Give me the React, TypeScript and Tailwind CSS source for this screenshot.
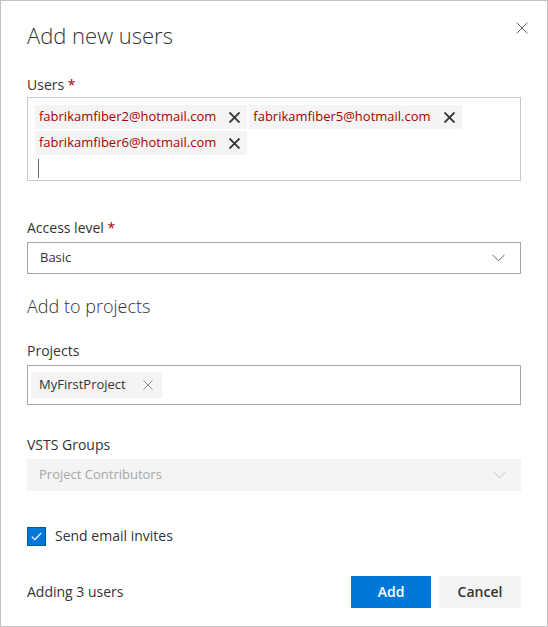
import { useState } from "react"

const font = { fontFamily: '"Segoe UI", "Open Sans", sans-serif' }

const CloseIcon = ({ size = 12, stroke = "#666", width = 1 }: { size?: number; stroke?: string; width?: number }) => (
  <svg width={size} height={size} viewBox="0 0 12 12" fill="none">
    <path d="M0.5 0.5 L11.5 11.5 M11.5 0.5 L0.5 11.5" stroke={stroke} strokeWidth={width} />
  </svg>
)

const Chevron = ({ color = "#666" }: { color?: string }) => (
  <svg width="13" height="8" viewBox="0 0 13 8" fill="none">
    <path d="M0.5 0.8 L6.5 6.8 L12.5 0.8" stroke={color} strokeWidth="1" />
  </svg>
)

const EmailChip = ({ email }: { email: string }) => (
  <div className="flex h-6 items-center bg-[#f4f4f4] pl-1 pr-[7px]">
    <span className="text-[13px] text-[#a80000]">{email}</span>
    <span className="ml-[13px] flex items-center">
      <CloseIcon size={11} stroke="#333" width={2} />
    </span>
  </div>
)

const Label = ({ text, required }: { text: string; required?: boolean }) => (
  <div className="text-sm leading-5 text-[#333]">
    {text}
    {required && <span className="text-[#a80000]"> *</span>}
  </div>
)

export default function App() {
  const [invite, setInvite] = useState(true)
  const emails = ["fabrikamfiber2@hotmail.com", "fabrikamfiber5@hotmail.com", "fabrikamfiber6@hotmail.com"]

  return (
    <div style={font} className="h-[627px] w-[548px] border border-[#c2c2c2] bg-white text-[#333]">
      <div className="flex items-start justify-between pl-[26px] pr-[19px] pt-[20px]">
        <h1 className="text-[22px] font-light leading-7 text-[#333]">Add new users</h1>
        <button className="mt-[1px] p-0">
          <CloseIcon size={12} stroke="#666" />
        </button>
      </div>

      <div className="pl-[26px] pr-[26px]">
        <div className="mt-[26px]">
          <Label text="Users" required />
        </div>
        <div className="mt-[2px] h-[84px] border border-[#c8c8c8] px-[7px] pt-[7px]">
          <div className="flex flex-wrap gap-[2px]">
            {emails.map((e) => (
              <EmailChip key={e} email={e} />
            ))}
          </div>
          <div className="ml-[3px] mt-[4px] h-[19px] w-px bg-[#666]" />
        </div>

        <div className="mt-[37px]">
          <Label text="Access level" required />
        </div>
        <div className="mt-[4px] flex h-8 items-center justify-between border border-[#a6a6a6] pl-3 pr-[15px]">
          <span className="text-[13px]">Basic</span>
          <Chevron />
        </div>

        <div className="mt-[20px] text-lg font-light leading-6 text-[#333]">Add to projects</div>

        <div className="mt-[23px]">
          <Label text="Projects" />
        </div>
        <div className="mt-[4px] flex h-10 items-center border border-[#a6a6a6] pl-[3px]">
          <div className="flex h-[26px] items-center bg-[#f4f4f4] pl-2 pr-[9px]">
            <span className="text-[13px]">MyFirstProject</span>
            <span className="ml-[17px] flex items-center">
              <CloseIcon size={10} stroke="#777" />
            </span>
          </div>
        </div>

        <div className="mt-[30px]">
          <Label text="VSTS Groups" />
        </div>
        <div className="mt-[4px] flex h-8 items-center justify-between bg-[#f4f4f4] pl-3 pr-[15px]">
          <span className="text-[13px] text-[#a6a6a6]">Project Contributors</span>
          <Chevron color="#c8c8c8" />
        </div>

        <label className="mt-[35px] flex cursor-pointer items-center gap-[9px]">
          <span
            onClick={() => setInvite(!invite)}
            className="flex h-[19px] w-[19px] items-center justify-center border border-[#005a9e] bg-[#0078d7]"
          >
            {invite && (
              <svg width="11" height="9" viewBox="0 0 11 9" fill="none">
                <path d="M0.8 4.6 L3.8 7.6 L10.2 1" stroke="white" strokeWidth="1.1" />
              </svg>
            )}
          </span>
          <span className="text-sm">Send email invites</span>
        </label>

        <div className="mt-[30px] flex items-center justify-between">
          <span className="text-sm">Adding 3 users</span>
          <div className="flex gap-2">
            <button className="h-8 w-[80px] bg-[#0078d7] text-sm font-semibold text-white">Add</button>
            <button className="h-8 w-[82px] bg-[#f4f4f4] text-sm font-semibold text-[#333]">Cancel</button>
          </div>
        </div>
      </div>
    </div>
  )
}
